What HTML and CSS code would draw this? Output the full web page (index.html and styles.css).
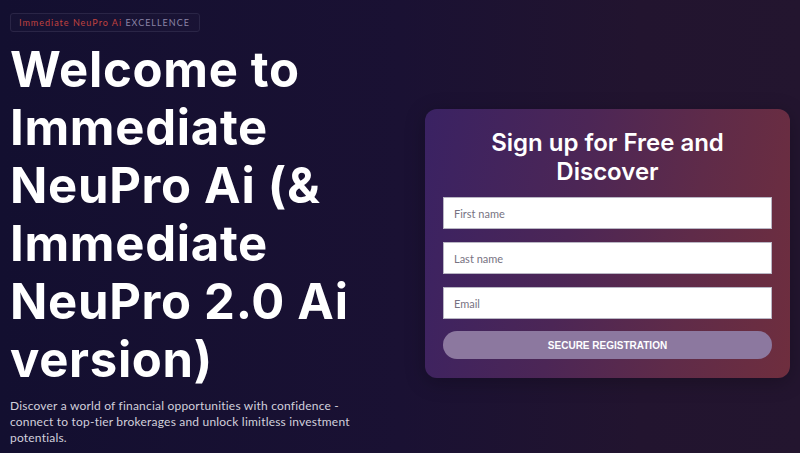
FILE: index.html
```html
<!DOCTYPE html>
<html lang="en">
<head>
    <meta charset="UTF-8">
    <meta name="viewport" content="width=device-width, initial-scale=1.0">
    <title>Immediate NeuPro Ai</title>
    <link rel="stylesheet" href="styles.css">
</head>
<body>
    <section class="hero">
        <div class="intro">
            <div class="badge"><span class="brand">Immediate NeuPro Ai</span> EXCELLENCE</div>
            <h1>Welcome to Immediate NeuPro Ai (&amp; Immediate NeuPro 2.0 Ai version)</h1>
            <p>Discover a world of financial opportunities with confidence - connect to top-tier brokerages and unlock limitless investment potentials.</p>
        </div>

        <div class="signup">
            <h2>Sign up for Free and Discover</h2>
            <form>
                <input type="text" placeholder="First name">
                <input type="text" placeholder="Last name">
                <input type="email" placeholder="Email">
                <button type="button">SECURE REGISTRATION</button>
            </form>
        </div>
    </section>
</body>
</html>
```

FILE: styles.css
```css
html, body {
    height: 100%;
}

body {
    margin: 0;
    font-family: "Lato", "DejaVu Sans", sans-serif;
    color: white;
    background: linear-gradient(to right, #130f30 0%, #1a1133 50%, #22142f 80%, #23152f 100%);
    overflow: hidden;
}

.hero {
    display: flex;
    justify-content: space-between;
    align-items: flex-start;
    padding: 10px 10px 0 10px;
}

.intro {
    width: 370px;
}

.badge {
    display: inline-block;
    font-size: 9px;
    line-height: 11px;
    letter-spacing: 1px;
    color: #8a84a6;
    padding: 3px 9px 3px 8px;
    border: 1px solid #2a2546;
    border-radius: 3px;
    background: rgba(255, 255, 255, 0.015);
}

.badge .brand {
    color: #c0423f;
}

h1 {
    font-family: "Inter", sans-serif;
    font-size: 49px;
    font-weight: 700;
    line-height: 58px;
    margin: 9px 0 9px 0;
    letter-spacing: 0.7px;
}

p {
    max-width: 345px;
    font-size: 12px;
    line-height: 16px;
    color: #d2d0dc;
    margin: 0;
    letter-spacing: 0.2px;
}

.signup {
    width: 329px;
    margin: 99px 0 0 0;
    padding: 19px 18px 19px 18px;
    border-radius: 12px;
    background: linear-gradient(100deg, #3a2263 0%, #4c2656 40%, #5f2b49 70%, #6f2e3e 100%);
    box-shadow: 0 4px 20px rgba(0, 0, 0, 0.25);
}

h2 {
    font-family: "Inter", sans-serif;
    font-size: 24px;
    font-weight: 600;
    line-height: 29px;
    text-align: center;
    margin: 0 30px 11px 30px;
}

form {
    display: flex;
    flex-direction: column;
    gap: 13px;
}

input {
    height: 32px;
    box-sizing: border-box;
    border: 1px solid #b9b6c4;
    padding: 0 10px;
    font-family: "Lato", sans-serif;
    font-size: 11px;
    color: #333;
    background: white;
}

input::placeholder {
    color: #777382;
}

button {
    height: 28px;
    border: none;
    border-radius: 14px;
    background: #8c789f;
    color: white;
    font-family: "Liberation Sans", Arial, sans-serif;
    font-size: 10px;
    font-weight: bold;
    margin-top: -1px;
}
```
